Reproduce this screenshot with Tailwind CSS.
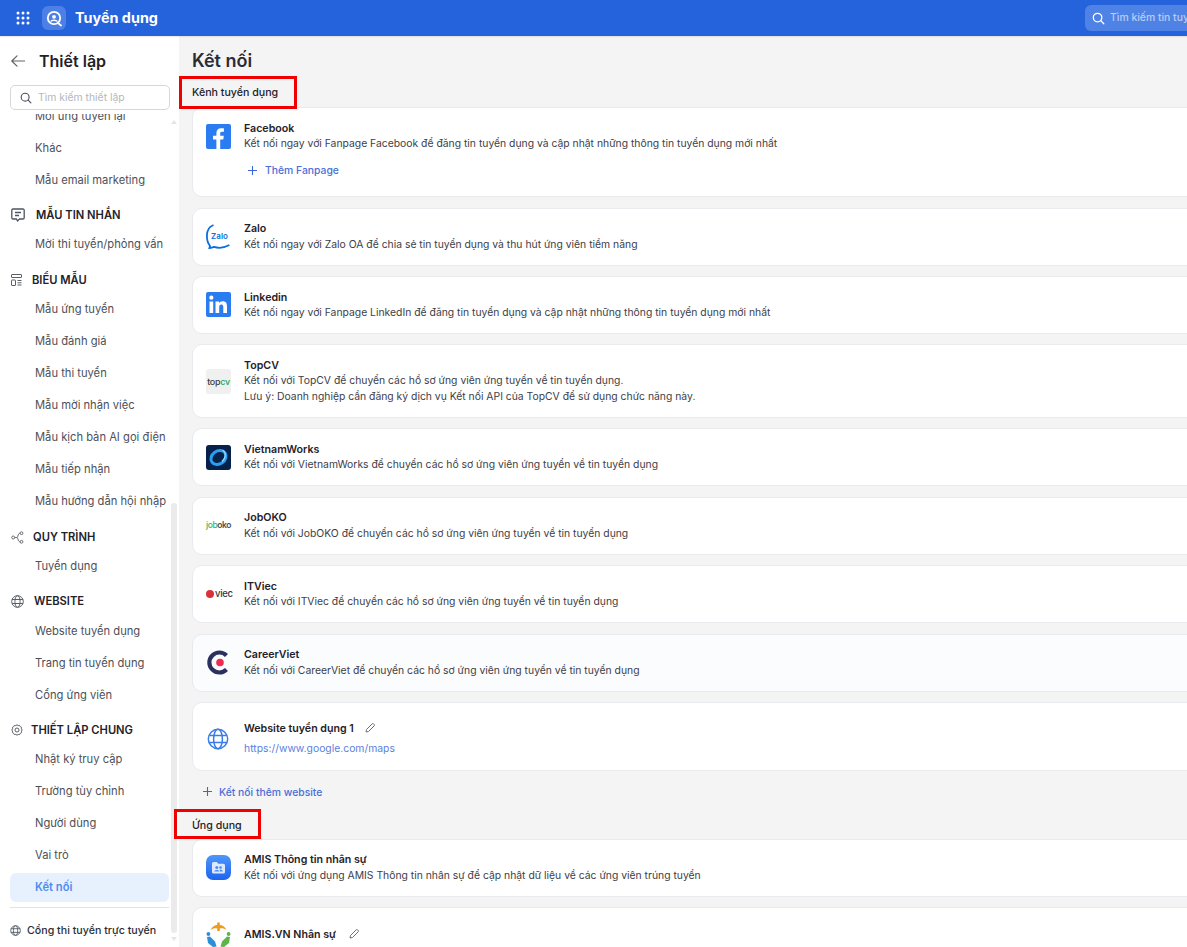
<!DOCTYPE html>
<html lang="vi">
<head>
<meta charset="utf-8">
<script src="https://cdn.jsdelivr.net/npm/@tailwindcss/browser@4"></script>
</head>
<body class="font-['Inter',sans-serif] bg-[#f4f4f4] text-[#1f2229] overflow-hidden">
<div class="relative w-[1187px] h-[947px] overflow-hidden flex flex-col">
  <header class="h-[36px] shrink-0 bg-[#2563dc] flex items-center pl-4 relative z-10 shadow-[0_1px_1px_rgba(0,0,0,0.08)]">
    <svg class="w-[14px] h-[14px] text-white" viewBox="0 0 14 14" fill="currentColor"><circle cx="2" cy="2" r="1.5"/><circle cx="7" cy="2" r="1.5"/><circle cx="12" cy="2" r="1.5"/><circle cx="2" cy="7" r="1.5"/><circle cx="7" cy="7" r="1.5"/><circle cx="12" cy="7" r="1.5"/><circle cx="2" cy="12" r="1.5"/><circle cx="7" cy="12" r="1.5"/><circle cx="12" cy="12" r="1.5"/></svg>
    <div class="ml-[12px] w-6 h-6 rounded-md bg-[#4c80e6] flex items-center justify-center">
      <svg class="w-[17px] h-[17px]" viewBox="0 0 17 17" fill="none" stroke="white" stroke-width="1.8"><circle cx="8" cy="8" r="6.2"/><circle cx="8" cy="6.8" r="1.9" fill="white" stroke="none"/><path d="M4.8 11.5c.8-1.6 5.6-1.6 6.4 0" stroke-width="1.6"/><path d="M12 13l3 2.5" stroke-linecap="round"/></svg>
    </div>
    <span class="ml-[9px] text-[14.4px] leading-5 font-bold text-white">Tuyển dụng</span>
    <div class="ml-auto w-[102px] h-[26px] rounded-l-md bg-[#4f82e5] flex items-center pl-[7px] overflow-hidden whitespace-nowrap">
      <svg class="w-[13px] h-[13px] shrink-0" viewBox="0 0 14 14" fill="none" stroke="white" stroke-width="1.4" stroke-linecap="round"><circle cx="6" cy="6" r="4.6"/><path d="M9.5 9.5l3.2 3.2"/></svg>
      <span class="ml-[5px] text-[10.4px] font-medium text-[#b9cdf5]">Tìm kiếm tin tuy</span>
    </div>
  </header>

  <div class="flex flex-1 min-h-0">
    <aside class="w-[179px] shrink-0 bg-white flex flex-col relative">
      <div class="h-[49px] flex items-center pl-[11px] pt-[1px] shrink-0">
        <svg class="w-[14px] h-[14px] text-[#60646c]" viewBox="0 0 14 14" fill="none" stroke="currentColor" stroke-width="1.2" stroke-linecap="round" stroke-linejoin="round"><path d="M13.5 7H.8M6 1.8L.8 7 6 12.2"/></svg>
        <span class="ml-[14px] text-[16px] leading-6 font-semibold text-[#1f2229]">Thiết lập</span>
      </div>
      <div class="mx-[10px] w-[160px] h-[25px] shrink-0 border border-[#d6d8dc] rounded-[5px] flex items-center pl-[9px]">
        <svg class="w-3 h-3 shrink-0" viewBox="0 0 14 14" fill="none" stroke="#4b4f57" stroke-width="1.3" stroke-linecap="round"><circle cx="6" cy="6" r="4.6"/><path d="M9.5 9.5l3.2 3.2"/></svg>
        <span class="ml-[6px] text-[10.4px] text-[#b4b7bd] whitespace-nowrap">Tìm kiếm thiết lập</span>
      </div>
      <div class="relative flex-1 min-h-0 overflow-hidden mt-[4px] text-[11.2px] text-[#4d5058]">
        <div class="flex flex-col mt-[-13.6px]">
          <div class="h-8 shrink-0 flex items-center pl-[35px]">Mời ứng tuyển lại</div>
          <div class="h-8 shrink-0 flex items-center pl-[35px]">Khác</div>
          <div class="h-8 shrink-0 flex items-center pl-[35px]">Mẫu email marketing</div>

          <div class="h-5 mt-[9px] shrink-0 flex items-center pl-[11px] font-semibold text-[#1f2229]">
            <svg class="w-[14px] h-[14px] mr-[11px]" viewBox="0 0 14 14" fill="none" stroke="#4b5563" stroke-width="1.3" stroke-linejoin="round"><path d="M2 1h10a1.2 1.2 0 0 1 1.2 1.2v7.6A1.2 1.2 0 0 1 12 11H8.5L6.5 13l-1-2H2A1.2 1.2 0 0 1 .8 9.8V2.200A1.2 1.2 0 0 1 2 1z"/><path d="M4 4.500h6M4 7.500h4"/></svg>MẪU TIN NHẮN
          </div>
          <div class="h-8 mt-[3px] shrink-0 flex items-center pl-[35px] whitespace-nowrap">Mời thi tuyển/phỏng vấn</div>

          <div class="h-5 mt-[10px] shrink-0 flex items-center pl-[11px] font-semibold text-[#1f2229]">
            <svg class="w-[11px] h-3 mr-[10px]" viewBox="0 0 11 12" fill="none" stroke="#5a5f68" stroke-width="1"><rect x=".5" y=".5" width="10" height="3" rx=".5"/><rect x=".5" y="6" width="4" height="5.500" rx=".5"/><path d="M6.500 6.500h4M6.500 8.800h4M6.500 11h4"/></svg>BIỂU MẪU
          </div>
          <div class="h-8 mt-[3px] shrink-0 flex items-center pl-[35px]">Mẫu ứng tuyển</div>
          <div class="h-8 shrink-0 flex items-center pl-[35px]">Mẫu đánh giá</div>
          <div class="h-8 shrink-0 flex items-center pl-[35px]">Mẫu thi tuyển</div>
          <div class="h-8 shrink-0 flex items-center pl-[35px]">Mẫu mời nhận việc</div>
          <div class="h-8 shrink-0 flex items-center pl-[35px]">Mẫu kịch bản AI gọi điện</div>
          <div class="h-8 shrink-0 flex items-center pl-[35px]">Mẫu tiếp nhận</div>
          <div class="h-8 shrink-0 flex items-center pl-[35px] whitespace-nowrap">Mẫu hướng dẫn hội nhập</div>

          <div class="h-5 mt-[10px] shrink-0 flex items-center pl-[11px] font-semibold text-[#1f2229]">
            <svg class="w-[13px] h-[13px] mr-[9px]" viewBox="0 0 13 13" fill="none" stroke="#5a5f68" stroke-width=".9"><circle cx="2.200" cy="6.500" r="1.500"/><circle cx="10.500" cy="2.200" r="1.400"/><circle cx="10.500" cy="10.800" r="1.400"/><path d="M3.700 6.500h2c1 0 1-1 1.500-2.500.4-1.300 1-1.800 2-1.800M5.700 6.500c1 0 1 1 1.500 2.500.4 1.300 1 1.800 2 1.800"/></svg>QUY TRÌNH
          </div>
          <div class="h-8 mt-[3px] shrink-0 flex items-center pl-[35px]">Tuyển dụng</div>

          <div class="h-5 mt-[9px] shrink-0 flex items-center pl-[11px] font-semibold text-[#1f2229]">
            <svg class="w-[13px] h-[13px] mr-[10px]" viewBox="0 0 13 13" fill="none" stroke="#5a5f68" stroke-width="1"><circle cx="6.500" cy="6.500" r="5.800"/><ellipse cx="6.500" cy="6.500" rx="2.600" ry="5.800"/><path d="M1 4.500h11M1 8.500h11"/></svg>WEBSITE
          </div>
          <div class="h-8 mt-[4px] shrink-0 flex items-center pl-[35px]">Website tuyển dụng</div>
          <div class="h-8 shrink-0 flex items-center pl-[35px]">Trang tin tuyển dụng</div>
          <div class="h-8 shrink-0 flex items-center pl-[35px]">Cổng ứng viên</div>

          <div class="h-5 mt-[9px] shrink-0 flex items-center pl-[11px] font-semibold text-[#1f2229]">
            <svg class="w-[12px] h-[12px] mr-[8px]" viewBox="0 0 12 12" fill="none" stroke="#5a5f68" stroke-width="1"><path d="M6 .8l1.200.8 1.400-.2.700 1.300 1.300.7-.2 1.400.8 1.200-.8 1.200.2 1.400-1.300.7-.7 1.300-1.400-.2-1.200.8-1.200-.8-1.400.2-.7-1.300-1.300-.7.2-1.400L.8 6l.8-1.200-.2-1.400 1.300-.7.7-1.300 1.400.2z"/><circle cx="6" cy="6" r="2"/></svg>THIẾT LẬP CHUNG
          </div>
          <div class="h-8 mt-[3px] shrink-0 flex items-center pl-[35px]">Nhật ký truy cập</div>
          <div class="h-8 shrink-0 flex items-center pl-[35px]">Trường tùy chỉnh</div>
          <div class="h-8 shrink-0 flex items-center pl-[35px]">Người dùng</div>
          <div class="h-8 shrink-0 flex items-center pl-[35px]">Vai trò</div>
          <div class="mt-[1.6px] mx-[10px] w-[159px] h-[29px] shrink-0 rounded-md bg-[#e7f1fe] text-[#4b8df0] font-semibold flex items-center pl-[25px]">Kết nối</div>
        </div>
      </div>
      <div class="mx-[10px] w-[159px] h-[40px] pt-[7px] shrink-0 border-t border-[#e2e3e6] flex items-center text-[10.67px] font-medium text-[#2b2e35] whitespace-nowrap">
        <svg class="w-3 h-3 mr-[5px] shrink-0" viewBox="0 0 13 13" fill="none" stroke="#5a5f68" stroke-width="1"><circle cx="6" cy="6" r="5.200"/><ellipse cx="6" cy="6" rx="2.300" ry="5.200"/><path d="M1 4h10M1 8h10"/></svg>Cổng thi tuyển trực tuyến
      </div>
      <div class="absolute left-[171px] top-[467px] w-[6px] h-[430px] rounded-[3px] bg-[#ebebeb]"></div>
      <svg class="absolute left-[171px] top-[84px] w-[6px] h-[4px]" viewBox="0 0 6 4" fill="#e5e5e5"><path d="M3 0l3 4H0z"/></svg>
      <svg class="absolute left-[171px] top-[901px] w-[6px] h-[4px]" viewBox="0 0 6 4" fill="#e5e5e5"><path d="M0 0h6L3 4z"/></svg>
    </aside>

    <main class="flex-1 min-w-0 overflow-hidden pl-[13px]">
      <h1 class="mt-[13px] text-[18px] leading-[24px] font-semibold text-[#2a2d34]">Kết nối</h1>
      <h2 class="mt-[12px] text-[10.65px] leading-4 font-medium text-[#1f2229]">Kênh tuyển dụng</h2>
      <div class="mt-[6px] flex flex-col w-[1100px] gap-[10.4px]">

        <div class="h-[90.2px] bg-white rounded-[10px] border border-[#e8eaee] flex items-start pl-[13px] pt-[13px]">
          <svg class="w-[25px] h-[25px] mt-[3px] shrink-0" viewBox="0 0 25 25"><rect width="25" height="25" rx="2" fill="#2b7cf0"/><path transform="translate(-3 0)" d="M17.200 25v-9.500h3.100l.5-3.700h-3.600V9.500c0-1.100.3-1.800 1.800-1.800h1.900V4.400c-.4 0-1.500-.1-2.800-.1-2.800 0-4.700 1.700-4.700 4.800v2.700H10v3.700h3.400V25z" fill="#fff"/></svg>
          <div class="ml-[13px] text-[10.36px] leading-[15px]">
            <div class="font-semibold text-[10.65px]">Facebook</div>
            <div class="text-[#3d4048]">Kết nối ngay với Fanpage Facebook để đăng tin tuyển dụng và cập nhật những thông tin tuyển dụng mới nhất</div>
            <div class="mt-[12px] ml-[4px] flex items-center text-[#4a6fd8] font-medium"><svg class="w-[9px] h-[9px] mr-[8px]" viewBox="0 0 9 9" stroke="#3a66d6" stroke-width="1.100"><path d="M4.500 0v9M0 4.500h9"/></svg>Thêm Fanpage</div>
          </div>
        </div>

        <div class="h-[58px] bg-white rounded-[10px] border border-[#e8eaee] flex items-center pl-[13px]">
          <svg class="w-[25px] h-[25px] shrink-0" viewBox="0 0 25 25" fill="none"><path d="M7.500 1C3 2.500.9 6.500.9 12c0 5 1.500 8 3.100 10l-.6 2c2-.1 3.400-.5 4.500-1.100 4 1.300 10 1.100 15.500-1.900" stroke="#0b6fe0" stroke-width="1.800"/><text x="13.500" y="15.200" text-anchor="middle" font-size="8" font-weight="600" fill="#0b6fe0" font-family="Inter">Zalo</text></svg>
          <div class="ml-[13px] text-[10.36px] leading-[15.6px]"><div class="font-semibold text-[10.65px]">Zalo</div><div class="text-[#3d4048]">Kết nối ngay với Zalo OA để chia sẻ tin tuyển dụng và thu hút ứng viên tiềm năng</div></div>
        </div>

        <div class="h-[58px] bg-white rounded-[10px] border border-[#e8eaee] flex items-center pl-[13px]">
          <svg class="w-[25px] h-[25px] shrink-0" viewBox="0 0 25 25"><rect width="25" height="25" rx="2" fill="#2b7cf0"/><g fill="#fff"><rect x="3.500" y="9.500" width="3.700" height="11.500"/><circle cx="5.350" cy="5.700" r="2.100"/><path d="M9.500 9.500h3.500v1.600c.6-1 1.900-1.900 3.700-1.900 3.500 0 4.300 2.200 4.300 5.300V21h-3.700v-5.700c0-1.500-.2-2.900-1.900-2.900-1.800 0-2.200 1.300-2.200 2.900V21H9.500z"/></g></svg>
          <div class="ml-[13px] pt-[1px] text-[10.36px] leading-[15px]"><div class="font-semibold text-[10.65px]">Linkedin</div><div class="text-[#3d4048]">Kết nối ngay với Fanpage LinkedIn để đăng tin tuyển dụng và cập nhật những thông tin tuyển dụng mới nhất</div></div>
        </div>

        <div class="h-[73.6px] bg-white rounded-[10px] border border-[#e8eaee] flex items-center pl-[13px]">
          <div class="w-[25px] h-[25px] shrink-0 rounded-[3px] bg-[#f0f0f0] flex items-center justify-center text-[9px] font-medium tracking-[-0.3px] leading-none"><span class="text-[#3a3d42]">top</span><span class="text-[#20a55e]">cv</span></div>
          <div class="ml-[13px] text-[10.36px] leading-[15.6px]"><div class="font-semibold text-[10.65px]">TopCV</div><div class="text-[#3d4048]">Kết nối với TopCV để chuyển các hồ sơ ứng viên ứng tuyển về tin tuyển dụng.</div><div class="text-[#3d4048]">Lưu ý: Doanh nghiệp cần đăng ký dịch vụ Kết nối API của TopCV để sử dụng chức năng này.</div></div>
        </div>

        <div class="h-[58px] bg-white rounded-[10px] border border-[#e8eaee] flex items-center pl-[13px]">
          <svg class="w-[25px] h-[25px] shrink-0" viewBox="0 0 25 25" fill="none"><rect width="25" height="25" rx="3" fill="#06224a"/><ellipse cx="12.500" cy="12.500" rx="8" ry="6.500" transform="rotate(-35 12.500 12.500)" stroke="#2d9df0" stroke-width="3"/><path d="M16.500 5c3.500 2 4 7.500-.5 11.500" stroke="#8fd0fa" stroke-width="1.400"/></svg>
          <div class="ml-[13px] text-[10.36px] leading-[15.6px]"><div class="font-semibold text-[10.65px]">VietnamWorks</div><div class="text-[#3d4048]">Kết nối với VietnamWorks để chuyển các hồ sơ ứng viên ứng tuyển về tin tuyển dụng</div></div>
        </div>

        <div class="h-[58px] bg-white rounded-[10px] border border-[#e8eaee] flex items-center pl-[13px]">
          <div class="w-[25px] h-[25px] shrink-0 flex items-center justify-center text-[8.500px] font-medium tracking-[-0.4px] leading-none"><span class="text-[#35b56a]">job</span><span class="text-[#4a4d55] font-semibold">oko</span></div>
          <div class="ml-[13px] text-[10.36px] leading-[15.6px]"><div class="font-semibold text-[10.65px]">JobOKO</div><div class="text-[#3d4048]">Kết nối với JobOKO để chuyển các hồ sơ ứng viên ứng tuyển về tin tuyển dụng</div></div>
        </div>

        <div class="h-[58px] bg-white rounded-[10px] border border-[#e8eaee] flex items-center pl-[13px]">
          <div class="w-[25px] h-[25px] shrink-0 flex items-center text-[9.500px] font-medium tracking-[-0.3px] leading-none text-[#33363d]"><span class="w-[8px] h-[8px] rounded-full bg-[#d9303a] mr-[1px] shrink-0"></span>viec</div>
          <div class="ml-[13px] text-[10.36px] leading-[15.6px]"><div class="font-semibold text-[10.65px]">ITViec</div><div class="text-[#3d4048]">Kết nối với ITViec để chuyển các hồ sơ ứng viên ứng tuyển về tin tuyển dụng</div></div>
        </div>

        <div class="h-[58px] bg-[#fbfcfe] rounded-[10px] border border-[#e8eaee] flex items-center pl-[13px]">
          <svg class="w-[25px] h-[25px] shrink-0" viewBox="0 0 25 25" fill="none"><path d="M20.500 5.500A10 10 0 1 0 20.500 19.500" stroke="#2a3160" stroke-width="4.200"/><circle cx="14" cy="12.500" r="3.800" fill="#ee2b52"/></svg>
          <div class="ml-[13px] text-[10.36px] leading-[15.6px]"><div class="font-semibold text-[10.65px]">CareerViet</div><div class="text-[#3d4048]">Kết nối với CareerViet để chuyển các hồ sơ ứng viên ứng tuyển về tin tuyển dụng</div></div>
        </div>

        <div class="h-[68.6px] bg-white rounded-[10px] border border-[#e8eaee] flex items-start pl-[13px] pt-[18px]">
          <svg class="w-[22px] h-[22px] ml-[1px] mt-[7px] shrink-0" viewBox="0 0 25 25" fill="none" stroke="#3b7de8" stroke-width="1.700"><circle cx="12.500" cy="12.500" r="11"/><ellipse cx="12.500" cy="12.500" rx="5" ry="11"/><path d="M2.500 8.500h20M2.500 16.500h20"/></svg>
          <div class="ml-[15px] text-[10.36px]">
            <div class="font-semibold text-[10.65px] leading-[15px] flex items-center">Website tuyển dụng 1<svg class="ml-[11px] w-[10px] h-[10px]" viewBox="0 0 10 10" fill="none" stroke="#6b6f77" stroke-width="1" stroke-linejoin="round"><path d="M1 9l.5-2.500L7.200.8a.9.900 0 0 1 1.300 0l.7.700a.9.900 0 0 1 0 1.300L3.500 8.500z"/></svg></div>
            <div class="mt-[5px] leading-[15px] text-[#5a7fe0]">https://www.google.com/maps</div>
          </div>
        </div>
      </div>

      <div class="mt-[13px] ml-[11px] flex items-center text-[10.36px] leading-4 text-[#4a6fd8] font-medium"><svg class="w-[9px] h-[9px] mr-[7px]" viewBox="0 0 9 9" stroke="#3a66d6" stroke-width="1.100"><path d="M4.500 0v9M0 4.500h9"/></svg>Kết nối thêm website</div>
      <h2 class="mt-[18px] text-[10.65px] leading-4 font-medium text-[#1f2229]">Ứng dụng</h2>
      <div class="mt-[5px] flex flex-col w-[1100px] gap-[10.4px]">
        <div class="h-[58px] bg-white rounded-[10px] border border-[#e8eaee] flex items-center pl-[13px]">
          <svg class="w-[25px] h-[25px] shrink-0" viewBox="0 0 25 25"><defs><linearGradient id="a" x1="0" y1="0" x2="0" y2="1"><stop offset="0" stop-color="#4f96fb"/><stop offset="1" stop-color="#1c64f0"/></linearGradient></defs><rect width="25" height="25" rx="7" fill="url(#a)"/><path d="M6 8.500A1.500 1.500 0 0 1 7.500 7h3.200l1.600 1.800h5.200A1.500 1.500 0 0 1 19 10.300v6.700a1.500 1.500 0 0 1-1.500 1.500h-10A1.500 1.500 0 0 1 6 17z" fill="#dbe8fe"/><circle cx="10.800" cy="12.500" r="1.500" fill="#4a8cf6"/><circle cx="14.600" cy="12.500" r="1.300" fill="#4a8cf6"/><path d="M8.200 16.500c.3-2 4.900-2 5.200 0zM14 16.500c0-.9-.2-1.400-.6-1.900 1.500-.4 3.200.3 3.400 1.900z" fill="#4a8cf6"/></svg>
          <div class="ml-[13px] pt-[1px] text-[10.36px] leading-[15.6px]"><div class="font-semibold text-[10.65px]">AMIS Thông tin nhân sự</div><div class="text-[#3d4048]">Kết nối với ứng dụng AMIS Thông tin nhân sự để cập nhật dữ liệu về các ứng viên trúng tuyển</div></div>
        </div>
        <div class="h-[70px] bg-white rounded-[10px] border border-[#e8eaee] flex items-start pl-[13px] pt-[14px]">
          <svg class="w-[25px] h-[25px] shrink-0" viewBox="0 0 25 25"><path d="M4.500 8C6 4.500 9 3 11.200 2.900V.5h2.600v2.400C16 3 19 4.500 20.500 8c-2-1.500-4.500-2-6.700-1.500v2.500h-2.600V6.500C9 6 6.500 6.500 4.500 8z" fill="#f09a1c"/><circle cx="2.400" cy="12" r="1.900" fill="#2d8fd8"/><path d="M1 15l3-.5 5 5 1.500 5-3.500.5-5-4z" fill="#2d8fd8"/><circle cx="22.600" cy="12" r="1.900" fill="#5cb548"/><path d="M24 15l-3-.5-5 5-1.500 5 3.500.5 5-4z" fill="#5cb548"/></svg>
          <div class="ml-[13px] mt-[5px] text-[10.65px] font-semibold leading-[15px] flex items-center">AMIS.VN Nhân sự<svg class="ml-[13px] w-[10px] h-[10px]" viewBox="0 0 10 10" fill="none" stroke="#6b6f77" stroke-width="1" stroke-linejoin="round"><path d="M1 9l.5-2.500L7.200.8a.9.900 0 0 1 1.300 0l.7.700a.9.900 0 0 1 0 1.300L3.500 8.500z"/></svg></div>
        </div>
      </div>
    </main>
  </div>

  <div class="absolute left-[179px] top-[76px] w-[118px] h-[33px] border-[3px] border-[#f00000]"></div>
  <div class="absolute left-[174px] top-[809px] w-[87px] h-[30px] border-[3px] border-[#f00000]"></div>
</div>
</body>
</html>
